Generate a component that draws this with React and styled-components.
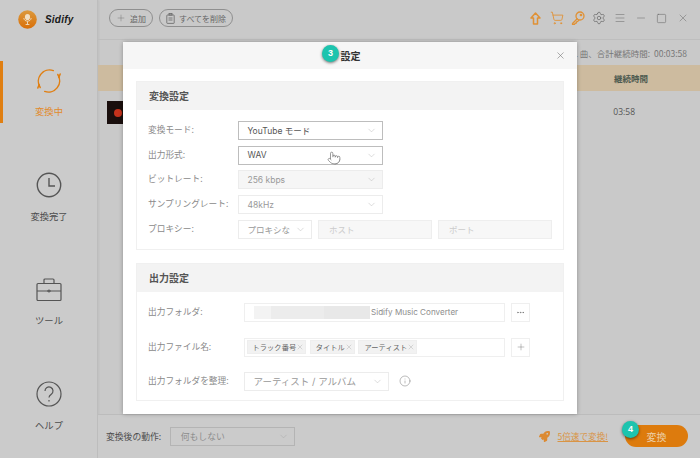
import React from "react";
import styled, { createGlobalStyle } from "styled-components";
import { Plus, ChevronDown, X, Ellipsis, Info, ShoppingCart, Settings, Menu, Minus, Square, Pointer } from "lucide-react";
import { FaRocket } from "react-icons/fa";

const Global = createGlobalStyle`
  html, body { margin: 0; padding: 0; width: 700px; height: 458px; overflow: hidden; }
  * { box-sizing: border-box; }
  body { font-family: "Noto Sans CJK JP", "Noto Sans", sans-serif; color: #555; }
`;
const Page = styled.div`
  position: relative; width: 700px; height: 458px; display: flex; background: #c9c9c9; overflow: hidden;
`;
const Side = styled.aside`
  width: 98px; height: 100%; flex: none; display: flex; flex-direction: column; background: #cbcbcb;
  border-right: 1px solid #bdbdbd; box-shadow: 1px 0 2px rgba(0,0,0,.05);
`;
const Brand = styled.div`
  height: 40px; flex: none; display: flex; align-items: center; padding: 0 0 2px 18px; gap: 8px;
`;
const BrandName = styled.span`
  font: italic 700 10px "Liberation Sans", sans-serif; color: #1a1a1a; letter-spacing: .2px;
`;
const NavList = styled.nav`
  flex: none; display: flex; flex-direction: column; gap: 42px; padding-top: 21px;
`;
const NavItem = styled.div`
  height: 62px; flex: none; display: flex; flex-direction: column; align-items: center; padding-top: ${p => p.$pt}px;
  gap: ${p => p.$gap}px; font-size: 9.3px; line-height: 14px; color: ${p => p.$active ? "#e28a2c" : "#4d4d4d"};
  border-left: 3px solid ${p => p.$active ? "#e07f12" : "transparent"}; padding-right: 2px;
`;
const Main = styled.main`
  flex: 1; min-width: 0; display: flex; flex-direction: column;
`;
const TopBar = styled.header`
  height: 40px; flex: none; display: flex; align-items: center; padding: 0 7px 3px 11px; gap: 6px;
  border-bottom: 1px solid #bebebe;
`;
const Pill = styled.div`
  height: 18px; display: flex; align-items: center; gap: 4px; padding: 0 6px; border: 1px solid #8f8f8f;
  border-radius: 9px; font-size: 8px; color: #666; white-space: nowrap;
`;
const Tools = styled.div`
  margin-left: auto; display: flex; align-items: center;
`;
const ToolSlot = styled.span`
  width: 21px; display: flex; align-items: center; justify-content: center;
`;
const Summary = styled.div`
  height: 25px; flex: none; display: flex; align-items: center; justify-content: flex-end; padding: 0 13px 0 0;
  font-size: 8.5px; color: #777; white-space: nowrap;
`;
const THead = styled.div`
  height: 26px; flex: none; display: flex; align-items: center; justify-content: flex-end; background: #cdbb9f;
  padding-right: 52px; font-size: 8.5px; font-weight: 700; color: #4d5a50;
`;
const TRow = styled.div`
  flex: 1; display: flex; align-items: flex-start; justify-content: space-between; padding: 10px 65px 0 9px;
  font: 8.5px "Open Sans", sans-serif; color: #555;
`;
const Thumb = styled.div`
  width: 16px; height: 23px; background: #1a0f0d; display: flex; align-items: center; justify-content: flex-end; padding-right: 1px;
  &::after { content: ""; width: 8px; height: 8px; border-radius: 50%; background: #c4321c; }
`;
const TrackTime = styled.span`
  padding-top: 5px;
`;
const Footer = styled.footer`
  height: 44px; flex: none; display: flex; align-items: center; padding: 0 12px 1px 8px; background: #cbcbcb;
  border-top: 1px solid #bcbcbc; font-size: 8.8px; color: #4d4d4d;
`;
const FooterSelect = styled.div`
  width: 125px; height: 19px; margin-left: 9px; display: flex; align-items: center; justify-content: space-between;
  border: 1px solid #b4b4b4; padding: 0 5.5px 0 9.5px; font-size: 8.8px; color: #8d8d8d;
`;
const Boost = styled.a`
  margin-left: auto; display: flex; align-items: center; gap: 7px; color: #d99445; font-size: 8.6px;
`;
const BoostText = styled.span`
  text-decoration: underline; padding-right: 5px;
`;
const ConvertBtn = styled.div`
  width: 63px; height: 22px; margin-left: 12px; border-radius: 11px; background: #dd7b0d; color: #eccfa8;
  font-size: 10px; display: flex; align-items: center; justify-content: center;
`;
const Modal = styled.section`
  position: absolute; left: 123px; top: 42px; width: 454px; height: 372px; background: #fff; border-radius: 3px 3px 0 0;
  box-shadow: 0 0 4px rgba(0,0,0,.3); display: flex; flex-direction: column;
`;
const ModalHead = styled.div`
  height: 27px; flex: none; display: flex; align-items: center; justify-content: center; position: relative;
  background: #f6f6f6; font-size: 10px; font-weight: 700; color: #333; padding-left: 1px; padding-bottom: 1px;
`;
const CloseBtn = styled.span`
  position: absolute; right: 11px; top: 8px; display: flex; color: #777;
`;
const ModalBody = styled.div`
  flex: 1; padding: 12px 13px 13px; display: flex; flex-direction: column; gap: 13px;
`;
const Panel = styled.div`
  border: 1px solid #f0f0f0; height: ${p => p.$h}px; flex: none; display: flex; flex-direction: column;
`;
const PanelHead = styled.div`
  height: 28px; flex: none; background: #f3f3f3; display: flex; align-items: center; padding: 0 0 2px 12px;
  font-size: 10px; font-weight: 700; color: #555;
`;
const ConvertRows = styled.div`
  padding: 11px 0 0 11px; display: flex; flex-direction: column; gap: 6.2px;
`;
const Row = styled.div`
  height: 18.6px; display: flex; align-items: center; gap: 6px;
`;
const Label = styled.span`
  width: ${p => p.$w}px; flex: none; font-size: 8.7px; color: #8a8a8a; white-space: nowrap; padding-bottom: 2px;
`;
const Select = styled.div`
  width: ${p => p.$w}px; height: 19px; flex: none; display: flex; align-items: center; justify-content: space-between;
  padding: 0 5.5px 0 8.5px; font: ${p => p.$fs || 8.5}px "Inter", "Noto Sans CJK JP", sans-serif;
  color: ${p => p.$strong ? "#555" : "#999"}; white-space: nowrap; overflow: hidden;
  border: 1px solid ${p => p.$strong ? "#bdbdbd" : "#ececec"}; border-width: ${p => p.$strong ? "1.5px" : "1px"};
  background: ${p => p.$disabled ? "#f6f6f6" : "#fff"};
`;
const Field = styled.div`
  width: ${p => p.$w}px; height: 19px; flex: none; background: #f7f7f7; border: 1px solid #eee; display: flex; align-items: center;
  padding-left: 10px; font-size: 8.5px; color: #ccc;
`;
const OutputRows = styled.div`
  padding: 10px 0 0 11px; display: flex; flex-direction: column;
`;
const OutRow = styled.div`
  height: 20px; margin-bottom: ${p => p.$mb}px; display: flex; align-items: center;
`;
const OutLabel = styled.span`
  width: 96px; flex: none; font-size: 8.7px; color: #8a8a8a; white-space: nowrap; padding-bottom: 2px;
`;
const TextBox = styled.div`
  width: 261px; height: 19px; flex: none; border: 1.5px solid #efefef; display: flex; align-items: center; gap: 3.5px;
  padding: 0 1.5px; font: 8.1px "Inter", sans-serif; color: #8d8d8d; white-space: nowrap; overflow: hidden;
`;
const Blur = styled.span`
  width: 116px; height: 13px; margin-left: 7px; margin-right: -2px; flex: none;
  background: linear-gradient(90deg, #f3f3f3 0 17px, #ececec 17px 70px, #e8e8e8 70px);
`;
const Tag = styled.span`
  height: 14px; padding: 0 1px 0 5px; background: #f2f2f2; border: 1px solid #eee; display: flex; align-items: center;
  font: 7.2px "Noto Sans CJK JP", sans-serif; color: #666; letter-spacing: .1px;
`;
const SquareBtn = styled.div`
  width: 19px; height: 19px; flex: none; margin-left: 6px; border: 1.5px solid #efefef; display: flex; align-items: center; justify-content: center; color: #666;
`;
const InfoMark = styled.span`
  display: flex; margin-left: 10px; color: #777;
`;
const Badge = styled.span`
  position: absolute; left: ${p => p.$x}px; top: ${p => p.$y}px; width: 17px; height: 17px; border-radius: 50%;
  background: #1cc4ae; color: #fff; font: 700 9px/17px "Liberation Sans", sans-serif; text-align: center;
  box-shadow: 0 1px 3px rgba(0,0,0,.55);
`;
const HandCursor = styled.span`
  position: absolute; left: 327px; top: 151px; display: flex; color: #555;
`;

const Logo = () => (
  <svg width="19" height="19" viewBox="0 0 19 19">
    <defs><linearGradient id="lg" x1="0" y1="0" x2="0" y2="1"><stop offset="0" stopColor="#dc9a3e" /><stop offset="1" stopColor="#d96f08" /></linearGradient></defs>
    <circle cx="9.5" cy="9.5" r="9.3" fill="url(#lg)" />
    <ellipse cx="9.5" cy="7" rx="2.6" ry="3.1" fill="#f1dfc3" />
    <path d="M5.8 8c.4 4.2 7 4.2 7.4 0M9.5 11.3v3M7.6 14.5h3.8" fill="none" stroke="#f1dfc3" strokeWidth=".9" />
  </svg>
);
const SyncIcon = () => (
  <svg width="26" height="26" viewBox="0 0 26 26" fill="none" stroke="#e07f12" strokeWidth="1.5" strokeLinecap="round">
    <path d="M4.2 19.5A11.3 11.3 0 0 1 17.3 2.6" />
    <path d="M21.8 6.5A11.3 11.3 0 0 1 8.7 23.4" />
    <path d="M22.8 9.6l1.4-3.7" /><path d="M3.2 16.4l-1.4 3.7" />
  </svg>
);
const ClockIcon = () => (
  <svg width="26" height="26" viewBox="0 0 26 26" fill="none" stroke="#555" strokeWidth="1.4">
    <circle cx="13" cy="13" r="11.7" /><path d="M13 6v8h6" />
  </svg>
);
const CaseIcon = () => (
  <svg width="26" height="24" viewBox="0 0 26 24" fill="none" stroke="#555" strokeWidth="1.2">
    <rect x="1" y="5.5" width="24" height="17" rx="1" /><path d="M8 5.5V2a1 1 0 0 1 1-1h8a1 1 0 0 1 1 1v3.5M1 13h24" /><path d="M11 13h4M13 11.5v3" />
  </svg>
);
const HelpIcon = () => (
  <svg width="26" height="26" viewBox="0 0 26 26" fill="none" stroke="#555" strokeWidth="1.2">
    <circle cx="13" cy="13" r="12" /><path d="M9 10a4 4 0 1 1 6.3 3.2c-1.4 1-2.3 1.7-2.3 3.3" /><path d="M13 19v1.6" />
  </svg>
);
const UpIcon = () => (
  <svg width="11" height="13" viewBox="0 0 11 13" fill="none" stroke="#e09135" strokeWidth="1.5" strokeLinejoin="round">
    <path d="M5.5 1L1 6h2.5v6h4V6H10z" />
  </svg>
);
const KeyIcon = () => (
  <svg width="14" height="14" viewBox="0 0 14 14" fill="none" stroke="#e09135" strokeWidth="1.3" strokeLinecap="round" strokeLinejoin="round">
    <circle cx="9" cy="5" r="4" />
    <circle cx="10" cy="4" r=".7" />
    <path d="M6.2 7.8L1.5 12.5v1h2l.6-1.2 1.2-.3.3-1.2 1.2-.4 1-1.2" />
  </svg>
);
const TrashIcon = () => (
  <svg width="9" height="11" viewBox="0 0 9 11" fill="none" stroke="#666" strokeWidth=".8">
    <rect x=".8" y="2" width="7.4" height="8.4" rx=".6" /><rect x="3" y=".5" width="3" height="1.6" /><path d="M2.5 5h4M2.5 7h4" />
  </svg>
);

const Chev = ({ c = "#b5b5b5" }) => <ChevronDown size={11} strokeWidth={1} color={c} />;
const TagX = () => <X size={8} strokeWidth={1} color="#999" />;

export default function App() {
  return (
    <Page>
      <Global />
      <Side>
        <Brand><Logo /><BrandName>Sidify</BrandName></Brand>
        <NavList>
          <NavItem $active $pt={7} $gap={10}><SyncIcon />変換中</NavItem>
          <NavItem $pt={7} $gap={11}><ClockIcon />変換完了</NavItem>
          <NavItem $pt={9} $gap={11}><CaseIcon />ツール</NavItem>
          <NavItem $pt={8} $gap={11}><HelpIcon />ヘルプ</NavItem>
        </NavList>
      </Side>
      <Main>
        <TopBar>
          <Pill><Plus size={10} strokeWidth={1} color="#666" />追加</Pill>
          <Pill><TrashIcon />すべてを削除</Pill>
          <Tools>
            <ToolSlot><UpIcon /></ToolSlot>
            <ToolSlot><ShoppingCart size={14} strokeWidth={1.5} color="#e09135" /></ToolSlot>
            <ToolSlot><KeyIcon /></ToolSlot>
            <ToolSlot><Settings size={14} strokeWidth={1.2} color="#666" /></ToolSlot>
            <ToolSlot><Menu size={12} strokeWidth={1.2} color="#777" /></ToolSlot>
            <ToolSlot><Minus size={12} strokeWidth={1.2} color="#777" /></ToolSlot>
            <ToolSlot><Square size={11} strokeWidth={1.2} color="#666" /></ToolSlot>
            <ToolSlot><X size={12} strokeWidth={1.2} color="#777" /></ToolSlot>
          </Tools>
        </TopBar>
        <Summary>1 曲、合計継続時間:&nbsp; 00:03:58</Summary>
        <THead>継続時間</THead>
        <TRow><Thumb /><TrackTime>03:58</TrackTime></TRow>
        <Footer>
          変換後の動作:
          <FooterSelect>何もしない<Chev c="#a5a5a5" /></FooterSelect>
          <Boost><FaRocket size={11} color="#dc8a32" /><BoostText>5倍速で変換!</BoostText></Boost>
          <ConvertBtn>変換</ConvertBtn>
        </Footer>
      </Main>
      <Modal>
        <ModalHead>
          設定
          <CloseBtn><X size={11} strokeWidth={1.3} /></CloseBtn>
        </ModalHead>
        <ModalBody>
          <Panel $h={169}>
            <PanelHead>変換設定</PanelHead>
            <ConvertRows>
              <Row><Label $w={84}>変換モード:</Label><Select $w={145} $strong>YouTube モード<Chev /></Select></Row>
              <Row><Label $w={84}>出力形式:</Label><Select $w={145} $strong>WAV<Chev /></Select></Row>
              <Row><Label $w={84}>ビットレート:</Label><Select $w={145} $disabled>256 kbps<Chev /></Select></Row>
              <Row><Label $w={84}>サンプリングレート:</Label><Select $w={145}>48kHz<Chev /></Select></Row>
              <Row>
                <Label $w={84}>プロキシー:</Label>
                <Select $w={74}>プロキシな<Chev /></Select>
                <Field $w={114}>ホスト</Field>
                <Field $w={114}>ポート</Field>
              </Row>
            </ConvertRows>
          </Panel>
          <Panel $h={138}>
            <PanelHead>出力設定</PanelHead>
            <OutputRows>
              <OutRow $mb={15}>
                <OutLabel>出力フォルダ:</OutLabel>
                <TextBox><Blur />Sidify Music Converter</TextBox>
                <SquareBtn><Ellipsis size={9} strokeWidth={1.5} /></SquareBtn>
              </OutRow>
              <OutRow $mb={14}>
                <OutLabel>出力ファイル名:</OutLabel>
                <TextBox>
                  <Tag>トラック番号<TagX /></Tag>
                  <Tag>タイトル<TagX /></Tag>
                  <Tag>アーティスト<TagX /></Tag>
                </TextBox>
                <SquareBtn><Plus size={10} strokeWidth={1} /></SquareBtn>
              </OutRow>
              <OutRow $mb={0}>
                <OutLabel>出力フォルダを整理:</OutLabel>
                <Select $w={145} $fs={9.5}>アーティスト / アルバム<Chev /></Select>
                <InfoMark><Info size={12} strokeWidth={1} /></InfoMark>
              </OutRow>
            </OutputRows>
          </Panel>
        </ModalBody>
      </Modal>
      <Badge $x={322} $y={45}>3</Badge>
      <Badge $x={622} $y={421}>4</Badge>
      <HandCursor><Pointer size={14} strokeWidth={1} fill="#fff" /></HandCursor>
    </Page>
  );
}
